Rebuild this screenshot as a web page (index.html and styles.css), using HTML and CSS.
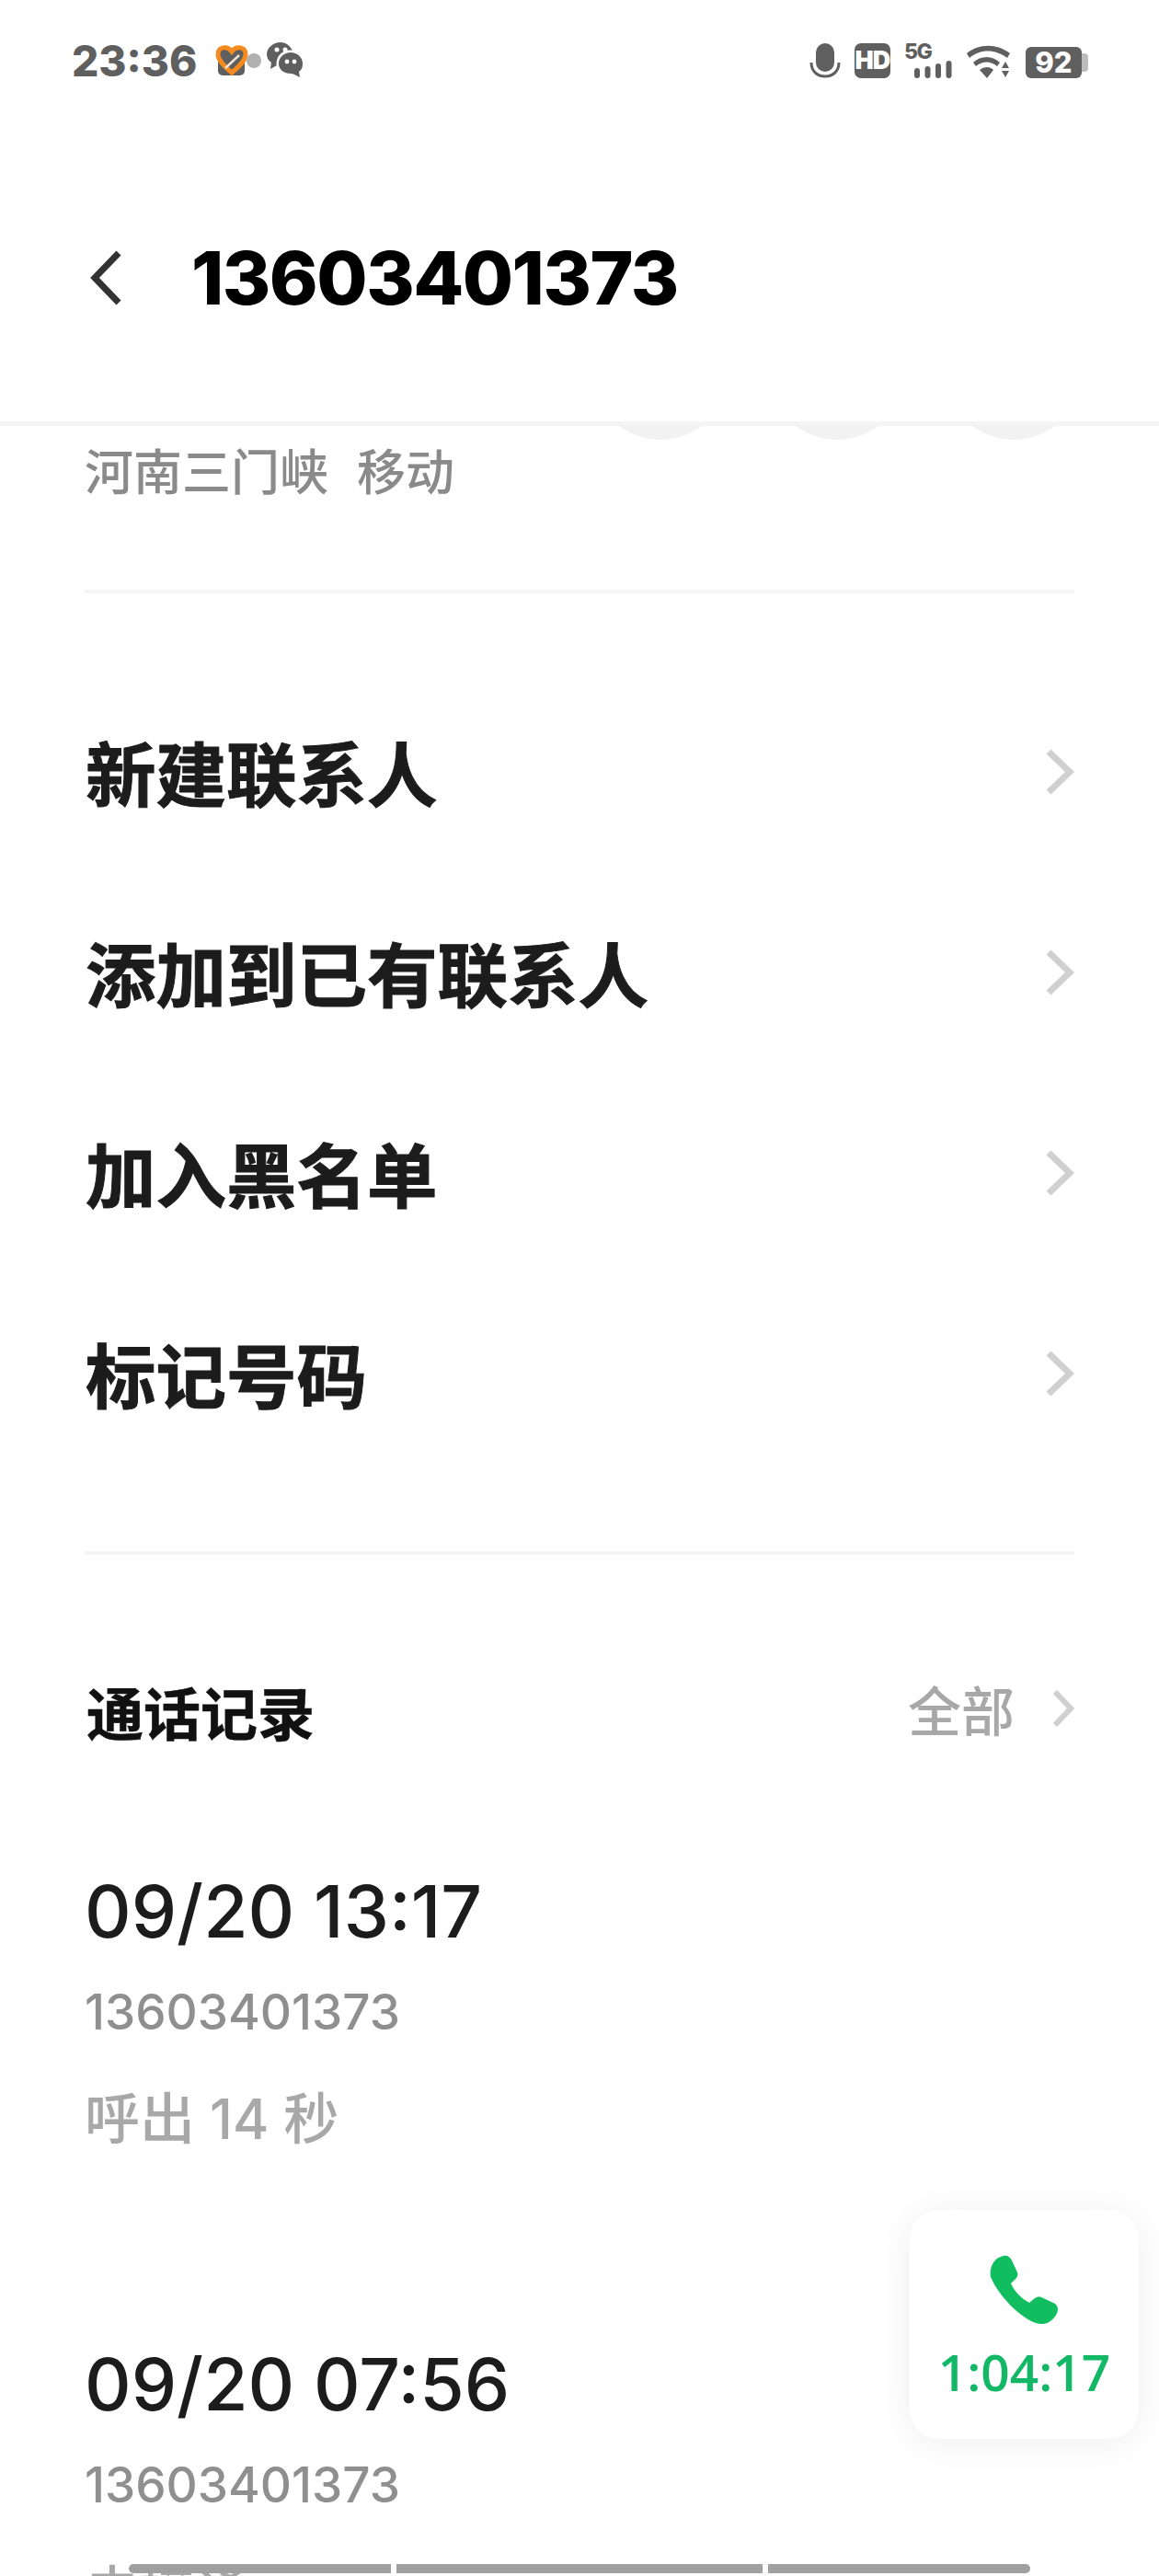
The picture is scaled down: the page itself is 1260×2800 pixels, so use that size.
FILE: index.html
```html
<!DOCTYPE html>
<html lang="zh-CN">
<head>
  <meta charset="UTF-8" />
  <meta name="viewport" content="width=device-width, initial-scale=1.0" />
  <title>13603401373</title>
  <link rel="stylesheet" href="styles.css">
</head>
<body>
  <div class="screen">
    <div class="statusbar">
      <div class="status-left">
        <span class="clock">23:36</span>
        <svg class="app-icon" width="36" height="36" viewBox="0 0 36 36">
          <rect x="3" y="6" width="29" height="28" rx="5" fill="#5f5f5f"/>
          <path d="M18 8C13 1 3 3 3 11c0 7 8 14 15 20 7-6 15-13 15-20C33 3 23 1 18 8z" fill="none" stroke="#f58a1f" stroke-width="5"/>
          <path d="M11 26l15-14" stroke="#f4e6d8" stroke-width="2.5"/>
        </svg>
        <span class="status-dot"></span>
        <svg class="wechat-icon" width="40" height="40" viewBox="0 0 40 40">
          <path d="M15 0C7 0 0 6 0 13c0 4 2 7 5 9l-1 7 7-4c1 0 3 0 4 0L29 12C27 5 22 0 15 0z" fill="#5f5f5f"/>
          <circle cx="25" cy="23" r="14.5" fill="#fff"/>
          <path d="M26 11c-7 0-13 5-13 12s6 11 13 11c1 0 3 0 4 1l6 3-1-6c3-2 4-5 4-9 0-7-6-12-13-12z" fill="#5f5f5f"/>
          <circle cx="11" cy="8" r="2.5" fill="#fff"/>
          <circle cx="20" cy="8" r="2.5" fill="#fff"/>
          <circle cx="22" cy="21" r="2.4" fill="#fff"/>
          <circle cx="30" cy="21" r="2.4" fill="#fff"/>
        </svg>
      </div>
      <div class="status-right">
        <svg width="34" height="38" viewBox="0 0 34 38">
          <rect x="7" y="0" width="20" height="31" rx="10" fill="#5f5f5f"/>
          <path d="M2 21c0 9 6 15 15 15s15-6 15-15" fill="none" stroke="#5f5f5f" stroke-width="3"/>
        </svg>
        <span class="hd-badge">HD</span>
        <div class="signal">
          <span class="signal-label">5G</span>
          <svg width="41" height="19" viewBox="0 0 41 19">
            <rect x="0" y="8" width="6" height="11" rx="3" fill="#5f5f5f"/>
            <rect x="11.5" y="6" width="6" height="13" rx="3" fill="#5f5f5f"/>
            <rect x="23" y="3" width="6" height="16" rx="3" fill="#5f5f5f"/>
            <rect x="34.5" y="0" width="6" height="19" rx="3" fill="#5f5f5f"/>
          </svg>
        </div>
        <svg class="wifi" width="50" height="38" viewBox="0 0 50 38">
          <path d="M1 10c13-11 33-11 47 0l-3 5C32 5 15 5 4 15z" fill="#5f5f5f"/>
          <path d="M8 20c8-8 21-8 29 0l-3 4c-7-6-16-6-23 0z" fill="#5f5f5f"/>
          <path d="M15 28c5-4 11-4 15 0l-7 9z" fill="#5f5f5f"/>
          <path d="M43 19l4 7h-8zM39 29h8l-4 7z" fill="#5f5f5f"/>
        </svg>
        <div class="battery">
          <span class="battery-body">92</span>
          <span class="battery-tip"></span>
        </div>
      </div>
    </div>

    <header class="titlebar">
      <svg class="back" width="38" height="60" viewBox="0 0 38 60">
        <path d="M33 3L7 30l26 27" fill="none" stroke="#333" stroke-width="7"/>
      </svg>
      <h1>13603401373</h1>
    </header>

    <main class="content">
      <div class="actions">
        <span class="action"></span>
        <span class="action"></span>
        <span class="action"></span>
      </div>
      <p class="location"><span>河南三门峡</span><span>移动</span></p>
      <hr class="divider">

      <ul class="menu">
        <li>新建联系人<svg width="32" height="50" viewBox="0 0 32 50"><path d="M4 3l23 22L4 47" fill="none" stroke="#d0d0d0" stroke-width="7"/></svg></li>
        <li>添加到已有联系人<svg width="32" height="50" viewBox="0 0 32 50"><path d="M4 3l23 22L4 47" fill="none" stroke="#d0d0d0" stroke-width="7"/></svg></li>
        <li>加入黑名单<svg width="32" height="50" viewBox="0 0 32 50"><path d="M4 3l23 22L4 47" fill="none" stroke="#d0d0d0" stroke-width="7"/></svg></li>
        <li>标记号码<svg width="32" height="50" viewBox="0 0 32 50"><path d="M4 3l23 22L4 47" fill="none" stroke="#d0d0d0" stroke-width="7"/></svg></li>
      </ul>
      <hr class="divider divider-log">

      <div class="log-head">
        <h2>通话记录</h2>
        <div class="log-all">全部<svg width="24" height="42" viewBox="0 0 24 42"><path d="M3 3l17 18L3 39" fill="none" stroke="#d0d0d0" stroke-width="6"/></svg></div>
      </div>

      <section class="call">
        <div class="call-time">09/20 13:17</div>
        <div class="call-number">13603401373</div>
        <div class="call-state">呼出 14 秒</div>
      </section>
      <section class="call">
        <div class="call-time">09/20 07:56</div>
        <div class="call-number">13603401373</div>
        <div class="call-state">未接通</div>
      </section>
    </main>

    <div class="call-float">
      <svg width="76" height="76" viewBox="0 0 76 76">
        <path d="M15 1c4-1 7 1 9 5l6 13c1 3 0 5-2 7l-5 5c4 9 11 16 20 21l6-5c2-1 4-2 7-1l13 6c3 1 5 4 5 7 0 4-3 9-7 12-4 4-10 5-17 3C33 68 10 45 1 24-1 13 5 3 15 1z" fill="#10bd5f"/>
      </svg>
      <span>1:04:17</span>
    </div>

    <div class="gesture">
      <span class="gesture-a"></span>
      <span class="gesture-b"></span>
      <span class="gesture-c"></span>
    </div>
  </div>
</body>
</html>
```

FILE: styles.css
```css
* {
  box-sizing: border-box;
}

html, body {
  margin: 0;
  padding: 0;
  background: #fff;
}

body {
  font-family: Inter, "Noto Sans CJK SC", sans-serif;
}

.screen {
  position: relative;
  width: 1260px;
  height: 2800px;
  overflow: hidden;
  background: #fff;
}

/* status bar */
.statusbar {
  height: 132px;
  padding: 47px 77px 0 78px;
  display: flex;
  justify-content: space-between;
  align-items: flex-start;
}

.status-left {
  display: flex;
  align-items: center;
  height: 38px;
}

.clock {
  font-size: 46px;
  font-weight: 800;
  color: #5f5f5f;
  line-height: 38px;
}

.app-icon {
  margin-left: 20px;
}

.status-dot {
  width: 16px;
  height: 16px;
  border-radius: 50%;
  background: #b0b0b0;
  margin-left: -2px;
}

.wechat-icon {
  margin-left: 6px;
}

.status-right {
  display: flex;
  align-items: flex-start;
  gap: 15px;
}

.hd-badge {
  width: 39px;
  height: 38px;
  border-radius: 7px;
  background: #5f5f5f;
  color: #fff;
  font-size: 27px;
  font-weight: 900;
  letter-spacing: -1px;
  text-align: center;
  line-height: 38px;
}

.signal {
  width: 52px;
  height: 38px;
  display: flex;
  flex-direction: column;
  color: #5f5f5f;
}

.signal-label {
  font-size: 23px;
  font-weight: 800;
  letter-spacing: -1.5px;
  line-height: 18px;
}

.signal svg {
  margin: 1px 0 0 11px;
}

.wifi {
  margin-top: 1px;
}

.battery {
  display: flex;
  align-items: center;
  margin-top: 4px;
}

.battery-body {
  width: 61px;
  height: 34px;
  border-radius: 6px;
  background: #5f5f5f;
  color: #fff;
  font-size: 31px;
  font-weight: 800;
  text-align: center;
  line-height: 34px;
}

.battery-tip {
  width: 7px;
  height: 20px;
  border-radius: 0 4px 4px 0;
  background: #bdbdbd;
}

/* title */
.titlebar {
  height: 331px;
  padding: 14px 0 0 96px;
  display: flex;
  align-items: center;
  gap: 74px;
  border-bottom: 5px solid #f5f5f5;
}

.titlebar h1 {
  margin: 0;
  font-size: 80px;
  font-weight: 800;
  letter-spacing: -1.5px;
  line-height: 1;
  color: #000;
}

/* scrolled content */
.content {
  height: 2337px;
  overflow: hidden;
  padding: 0 92px;
}

.actions {
  margin-top: -135px;
  padding: 0 0 0 551px;
  display: flex;
  gap: 42px;
}

.action {
  flex: none;
  width: 150px;
  height: 150px;
  border-radius: 50%;
  background: #f2f2f2;
}

.location {
  margin: 0;
  height: 70px;
  display: flex;
  gap: 31px;
  font-size: 53px;
  font-weight: 500;
  line-height: 72px;
  color: #8a8a8a;
}

.divider {
  margin: 93px 0 0;
  height: 4px;
  border: 0;
  background: #f5f5f5;
}

.divider-log {
  margin-top: 80px;
}

.menu {
  list-style: none;
  margin: 89px 0 0;
  padding: 0 0 0 1px;
}

.menu li {
  height: 218px;
  display: flex;
  align-items: center;
  justify-content: space-between;
  font-size: 76.5px;
  font-weight: 700;
  line-height: 208px;
  color: #1c1c1c;
  -webkit-text-stroke: 1px #1c1c1c;
}

.menu svg {
  margin-top: -8px;
}

.log-head {
  margin-top: 125px;
  height: 100px;
  display: flex;
  align-items: center;
  justify-content: space-between;
}

.log-head h2 {
  margin: 0 0 0 2px;
  font-size: 62px;
  font-weight: 700;
  line-height: 92px;
  color: #111;
  -webkit-text-stroke: 0.6px #111;
}

.log-all {
  display: flex;
  align-items: center;
  gap: 41px;
  margin-top: -16px;
  font-size: 58px;
  font-weight: 500;
  color: #a8a8a8;
}

.call {
  margin-bottom: 172px;
}

.log-head + .call {
  margin-top: 108px;
}

.call-time {
  font-size: 78.5px;
  font-weight: 500;
  line-height: 110px;
  color: #1c1c1c;
}

.call-number {
  font-size: 53px;
  font-weight: 500;
  line-height: 108px;
  color: #8f8f8f;
}

.call-state {
  font-size: 60px;
  font-weight: 500;
  line-height: 124px;
  color: #a8a8a8;
}

/* floating call pill */
.call-float {
  position: absolute;
  left: 989px;
  top: 2402px;
  width: 249px;
  height: 249px;
  padding-top: 49px;
  border-radius: 32px;
  background: #fff;
  box-shadow: 0 4px 40px rgba(0, 0, 0, 0.07);
  display: flex;
  flex-direction: column;
  align-items: center;
  gap: 21px;
  color: #12b866;
}

.call-float span {
  font-family: "Open Sans", sans-serif;
  font-size: 55px;
  font-weight: 600;
  line-height: 60px;
}

/* bottom gesture strip */
.gesture {
  position: absolute;
  left: 140px;
  top: 2787px;
  width: 980px;
  height: 10px;
  display: flex;
  gap: 6px;
}

.gesture span {
  background: #a0a0a0;
}

.gesture-a {
  width: 285px;
  border-radius: 5px 0 0 5px;
}

.gesture-b {
  width: 398px;
}

.gesture-c {
  width: 285px;
  border-radius: 0 5px 5px 0;
}
```
